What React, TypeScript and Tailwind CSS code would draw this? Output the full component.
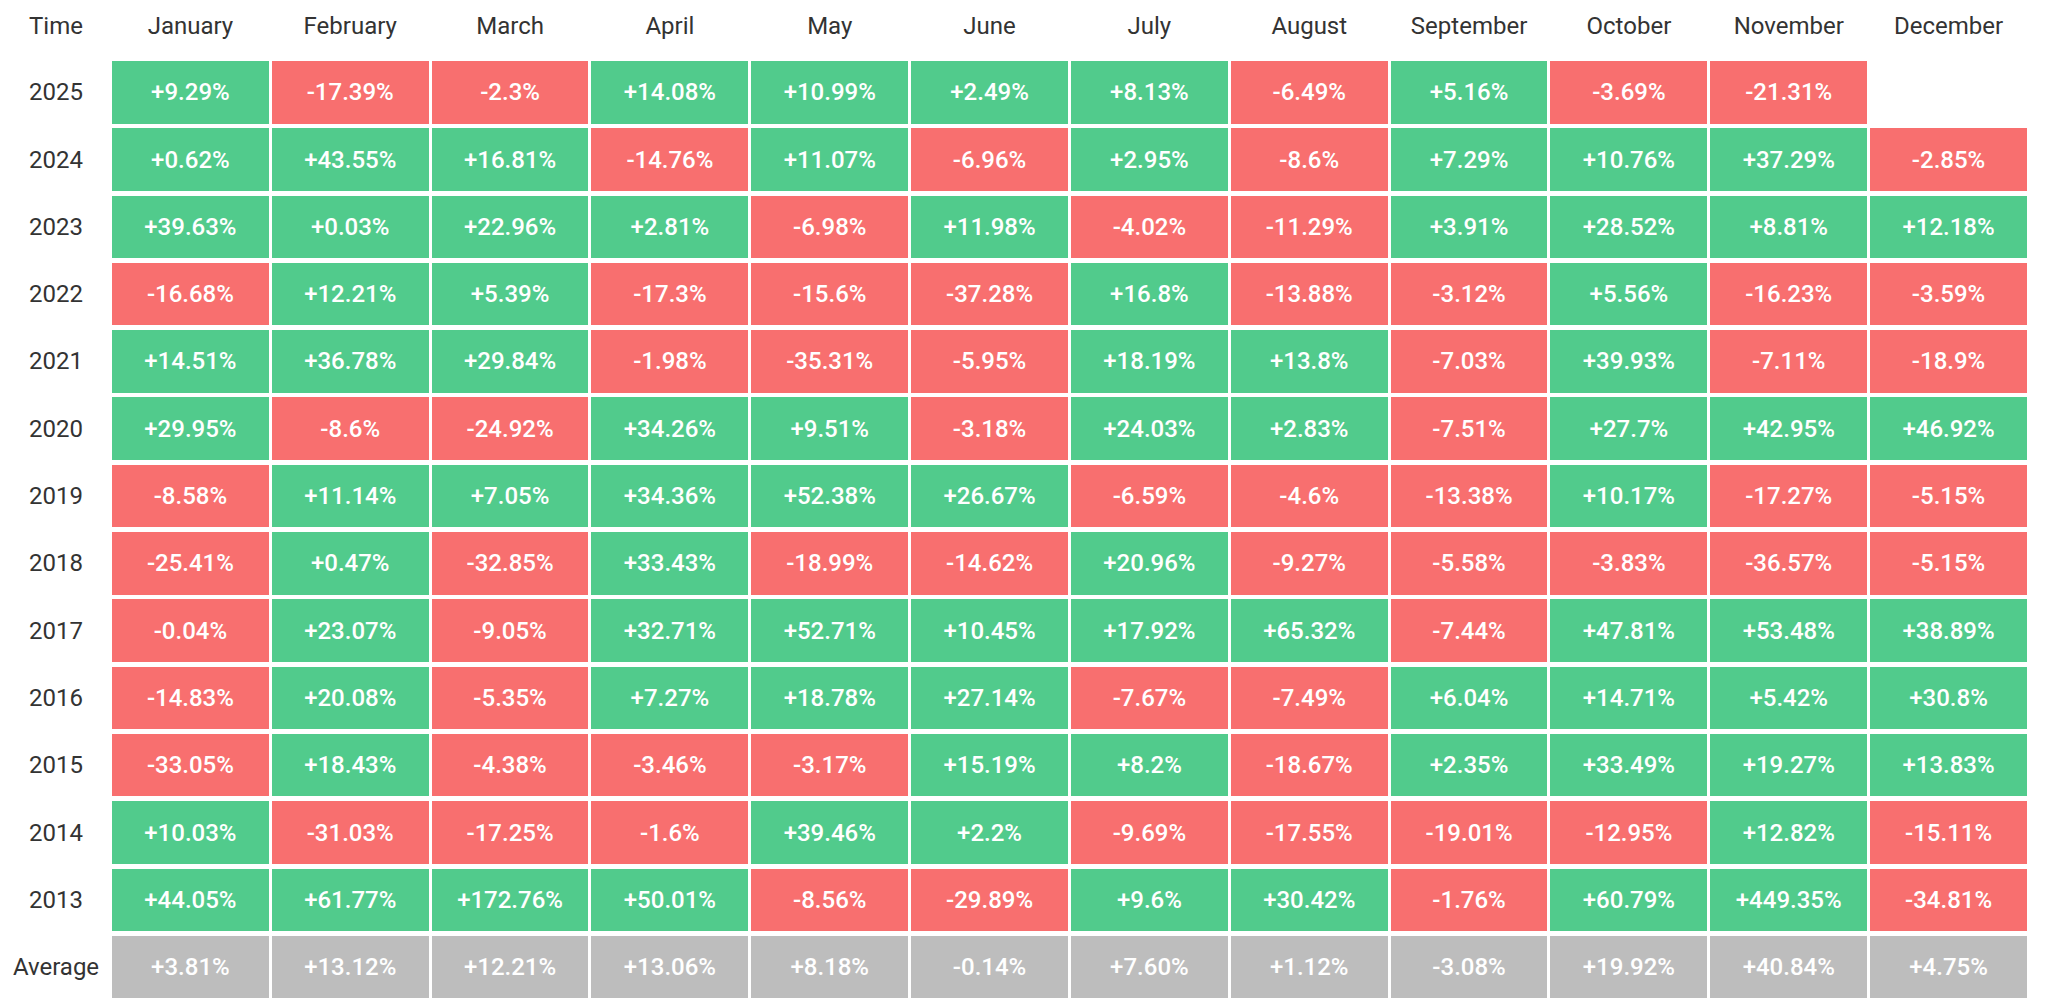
import React from "react";

const months = [
  "January",
  "February",
  "March",
  "April",
  "May",
  "June",
  "July",
  "August",
  "September",
  "October",
  "November",
  "December",
];

const rows: { label: string; values: string[] }[] = [
  { label: "2025", values: ["+9.29%", "-17.39%", "-2.3%", "+14.08%", "+10.99%", "+2.49%", "+8.13%", "-6.49%", "+5.16%", "-3.69%", "-21.31%", ""] },
  { label: "2024", values: ["+0.62%", "+43.55%", "+16.81%", "-14.76%", "+11.07%", "-6.96%", "+2.95%", "-8.6%", "+7.29%", "+10.76%", "+37.29%", "-2.85%"] },
  { label: "2023", values: ["+39.63%", "+0.03%", "+22.96%", "+2.81%", "-6.98%", "+11.98%", "-4.02%", "-11.29%", "+3.91%", "+28.52%", "+8.81%", "+12.18%"] },
  { label: "2022", values: ["-16.68%", "+12.21%", "+5.39%", "-17.3%", "-15.6%", "-37.28%", "+16.8%", "-13.88%", "-3.12%", "+5.56%", "-16.23%", "-3.59%"] },
  { label: "2021", values: ["+14.51%", "+36.78%", "+29.84%", "-1.98%", "-35.31%", "-5.95%", "+18.19%", "+13.8%", "-7.03%", "+39.93%", "-7.11%", "-18.9%"] },
  { label: "2020", values: ["+29.95%", "-8.6%", "-24.92%", "+34.26%", "+9.51%", "-3.18%", "+24.03%", "+2.83%", "-7.51%", "+27.7%", "+42.95%", "+46.92%"] },
  { label: "2019", values: ["-8.58%", "+11.14%", "+7.05%", "+34.36%", "+52.38%", "+26.67%", "-6.59%", "-4.6%", "-13.38%", "+10.17%", "-17.27%", "-5.15%"] },
  { label: "2018", values: ["-25.41%", "+0.47%", "-32.85%", "+33.43%", "-18.99%", "-14.62%", "+20.96%", "-9.27%", "-5.58%", "-3.83%", "-36.57%", "-5.15%"] },
  { label: "2017", values: ["-0.04%", "+23.07%", "-9.05%", "+32.71%", "+52.71%", "+10.45%", "+17.92%", "+65.32%", "-7.44%", "+47.81%", "+53.48%", "+38.89%"] },
  { label: "2016", values: ["-14.83%", "+20.08%", "-5.35%", "+7.27%", "+18.78%", "+27.14%", "-7.67%", "-7.49%", "+6.04%", "+14.71%", "+5.42%", "+30.8%"] },
  { label: "2015", values: ["-33.05%", "+18.43%", "-4.38%", "-3.46%", "-3.17%", "+15.19%", "+8.2%", "-18.67%", "+2.35%", "+33.49%", "+19.27%", "+13.83%"] },
  { label: "2014", values: ["+10.03%", "-31.03%", "-17.25%", "-1.6%", "+39.46%", "+2.2%", "-9.69%", "-17.55%", "-19.01%", "-12.95%", "+12.82%", "-15.11%"] },
  { label: "2013", values: ["+44.05%", "+61.77%", "+172.76%", "+50.01%", "-8.56%", "-29.89%", "+9.6%", "+30.42%", "-1.76%", "+60.79%", "+449.35%", "-34.81%"] },
];

const average = ["+3.81%", "+13.12%", "+12.21%", "+13.06%", "+8.18%", "-0.14%", "+7.60%", "+1.12%", "-3.08%", "+19.92%", "+40.84%", "+4.75%"];

const Cell = ({ value, gray }: { value: string; gray?: boolean }) => {
  if (!value) return <div className="h-[62.5px]" />;
  const bg = gray ? "bg-[#bdbdbd]" : value.startsWith("-") ? "bg-[#f86f6f]" : "bg-[#51cb8c]";
  return (
    <div className={`${bg} h-[62.5px] flex items-center justify-center text-white text-[24px] font-medium`}>
      {value}
    </div>
  );
};

const App = () => {
  return (
    <div className="w-[2048px] h-[1004px] bg-white overflow-hidden" style={{ fontFamily: "Roboto, 'Liberation Sans', sans-serif" }}>
      <div className="w-[2027px]">
        <div className="flex h-[52px] items-center mb-[9px] text-[24px] text-[#333333]">
          <div className="w-[112px] text-center">Time</div>
          <div className="flex-1 grid grid-cols-12 gap-x-[3px]">
            {months.map((m) => (
              <div key={m} className="text-center">
                {m}
              </div>
            ))}
          </div>
        </div>
        <div className="flex flex-col gap-y-[4.8px]">
          {rows.map((r) => (
            <div key={r.label} className="flex items-center">
              <div className="w-[112px] text-center text-[24px] text-[#333333]">{r.label}</div>
              <div className="flex-1 grid grid-cols-12 gap-x-[3px]">
                {r.values.map((v, i) => (
                  <Cell key={i} value={v} />
                ))}
              </div>
            </div>
          ))}
          <div className="flex items-center">
            <div className="w-[112px] text-center text-[24px] text-[#333333]">Average</div>
            <div className="flex-1 grid grid-cols-12 gap-x-[3px]">
              {average.map((v, i) => (
                <Cell key={i} value={v} gray />
              ))}
            </div>
          </div>
        </div>
      </div>
    </div>
  );
};

export default App;
